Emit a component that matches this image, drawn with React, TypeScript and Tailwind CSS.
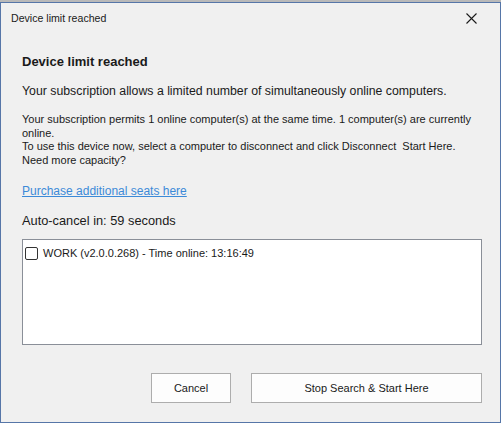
import React from "react";

export default function App() {
  const body = { fontFamily: '"Liberation Sans", Arial, sans-serif' };
  const ui = { fontFamily: '"Liberation Sans", Arial, sans-serif' };
  return (
    <div className="w-[501px] h-[423px] bg-[#c8c8c8] flex flex-col">
      <div className="h-[2px] bg-[#b9b9b9] shrink-0" />
      <div className="flex-1 flex flex-col bg-[#f0f0f0] border border-[#5676a8]">
        {/* title bar */}
        <div className="h-[31px] shrink-0 flex items-center justify-between pl-[10px] pr-[23px]">
          <span className="text-[10.6px] text-[#1a1a1a]" style={ui}>Device limit reached</span>
          <svg width="11" height="11" viewBox="0 0 11 11">
            <path d="M0.5 0.5 L10.5 10.5 M10.5 0.5 L0.5 10.5" stroke="#1a1a1a" strokeWidth="1.1" />
          </svg>
        </div>
        <div className="flex flex-col pl-[21px] pr-[18px]" style={body}>
          <div className="mt-[20px] text-[13px] font-bold text-[#1a1a1a] leading-[16px]">Device limit reached</div>
          <div className="mt-[13px] text-[12.3px] text-[#1a1a1a] leading-[16px]">
            Your subscription allows a limited number of simultaneously online computers.
          </div>
          <div className="mt-[14px] text-[11px] text-[#1a1a1a] leading-[13.5px] whitespace-nowrap">
            Your subscription permits 1 online computer(s) at the same time. 1 computer(s) are currently
            <br />
            online.
            <br />
            To use this device now, select a computer to disconnect and click Disconnect&nbsp; Start Here.
            <br />
            Need more capacity?
          </div>
          <div className="mt-[16px] text-[12px] leading-[16px]">
            <a className="text-[#3c8ad8] underline">Purchase additional seats here</a>
          </div>
          <div className="mt-[14px] text-[12.8px] text-[#1a1a1a] leading-[16px]">Auto-cancel in: 59 seconds</div>
          <div className="mt-[10px] h-[106px] bg-white border border-[#8a8f98] pt-[6px] pl-[2px]">
            <div className="flex items-center gap-[5px] text-[11px] text-[#1a1a1a] leading-[14px]">
              <div className="w-[13px] h-[13px] border border-[#333] rounded-[2px] bg-white" />
              <span>WORK (v2.0.0.268) - Time online: 13:16:49</span>
            </div>
          </div>
          <div className="mt-[28px] flex justify-end gap-[20px]">
            <button className="w-[80px] h-[30px] bg-[#fdfdfd] border border-[#adadad] text-[11px] text-[#1a1a1a]" style={ui}>Cancel</button>
            <button className="w-[231px] h-[30px] bg-[#fdfdfd] border border-[#adadad] text-[11px] text-[#1a1a1a]" style={ui}>Stop Search &amp; Start Here</button>
          </div>
        </div>
      </div>
    </div>
  );
}
